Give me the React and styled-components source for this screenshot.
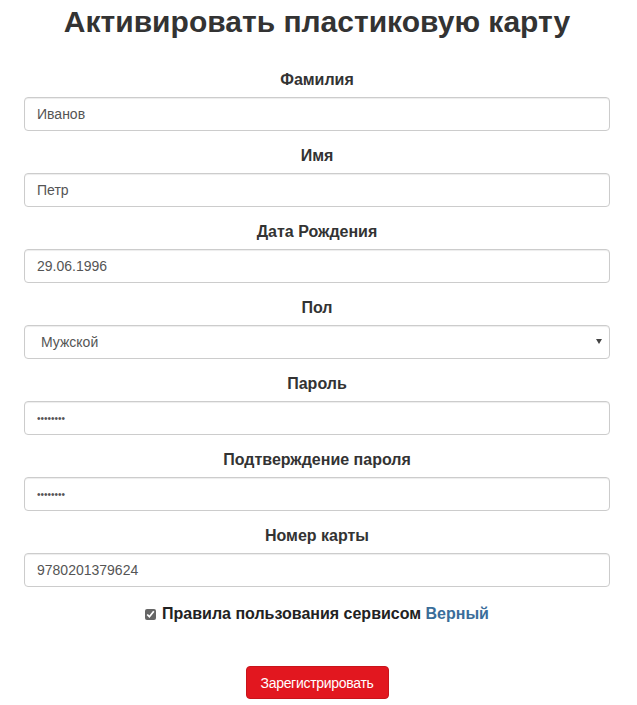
import React from 'react';
import styled, { createGlobalStyle } from 'styled-components';

const GlobalStyle = createGlobalStyle`
  body {
    margin: 0;
    background: #fff;
    font-family: "Liberation Sans", Arial, sans-serif;
    color: #333;
  }
`;

const Page = styled.div`
  padding: 0 27px 0 24px;
`;

const Title = styled.h1`
  margin: 5px 0 32px;
  font-size: 30px;
  line-height: 33px;
  font-weight: bold;
  text-align: center;
  color: #333;
`;

const Group = styled.div`
  display: flex;
  flex-direction: column;
  margin-bottom: 15px;
`;

const Label = styled.label`
  display: block;
  text-align: center;
  font-size: 16px;
  font-weight: bold;
  line-height: 20px;
  margin-bottom: 7px;
  color: #333;
`;

const Input = styled.input`
  box-sizing: border-box;
  width: 100%;
  height: 34px;
  padding: 6px 12px;
  border: 1px solid #ccc;
  border-radius: 4px;
  box-shadow: inset 0 1px 1px rgba(0, 0, 0, 0.075);
  font-family: "Liberation Sans", Arial, sans-serif;
  font-size: ${(p) => (p.$masked ? '10px' : '14px')};
  color: #555;
  background: #fff;
  outline: none;
`;

const SelectWrap = styled.div`
  position: relative;
`;

const Select = styled.select`
  box-sizing: border-box;
  width: 100%;
  height: 34px;
  padding: 6px 12px 6px 16px;
  border: 1px solid #ccc;
  border-radius: 4px;
  box-shadow: inset 0 1px 1px rgba(0, 0, 0, 0.075);
  font-family: "Liberation Sans", Arial, sans-serif;
  font-size: 14px;
  color: #555;
  background: #fff;
  appearance: none;
  outline: none;
`;

const Caret = styled.span`
  position: absolute;
  right: 8px;
  top: 14px;
  width: 0;
  height: 0;
  border-left: 3px solid transparent;
  border-right: 3px solid transparent;
  border-top: 5px solid #444;
  pointer-events: none;
`;

const Agree = styled.div`
  display: flex;
  justify-content: center;
  align-items: center;
  gap: 6px;
  margin-top: 18px;
  font-size: 16px;
  font-weight: bold;
  color: #222;
`;

const Check = styled.input`
  width: 11px;
  height: 11px;
  margin: 0;
  accent-color: #666;
`;

const Link = styled.a`
  color: #3a6d9a;
  text-decoration: none;
`;

const Actions = styled.div`
  display: flex;
  justify-content: center;
  margin-top: 43px;
`;

const Button = styled.button`
  width: 143px;
  height: 33px;
  border: 1px solid #c8141b;
  border-radius: 4px;
  background: #e2171f;
  color: #fff;
  font-family: "Liberation Sans", Arial, sans-serif;
  font-size: 14px;
  letter-spacing: -0.3px;
  cursor: pointer;
`;

const fields = [
  { label: 'Фамилия', value: 'Иванов' },
  { label: 'Имя', value: 'Петр' },
  { label: 'Дата Рождения', value: '29.06.1996' },
  { label: 'Пол', select: true },
  { label: 'Пароль', value: '12345678', masked: true },
  { label: 'Подтверждение пароля', value: '12345678', masked: true },
  { label: 'Номер карты', value: '9780201379624' },
];

export default function App() {
  return (
    <>
      <GlobalStyle />
      <Page>
        <Title>Активировать пластиковую карту</Title>
        {fields.map((f) => (
          <Group key={f.label}>
            <Label>{f.label}</Label>
            {f.select ? (
              <SelectWrap>
                <Select defaultValue="m">
                  <option value="m">Мужской</option>
                  <option value="f">Женский</option>
                </Select>
                <Caret />
              </SelectWrap>
            ) : (
              <Input
                type={f.masked ? 'password' : 'text'}
                $masked={f.masked}
                defaultValue={f.value}
              />
            )}
          </Group>
        ))}
        <Agree>
          <Check type="checkbox" defaultChecked />
          <span>
            Правила пользования сервисом <Link href="#">Верный</Link>
          </span>
        </Agree>
        <Actions>
          <Button type="button">Зарегистрировать</Button>
        </Actions>
      </Page>
    </>
  );
}
